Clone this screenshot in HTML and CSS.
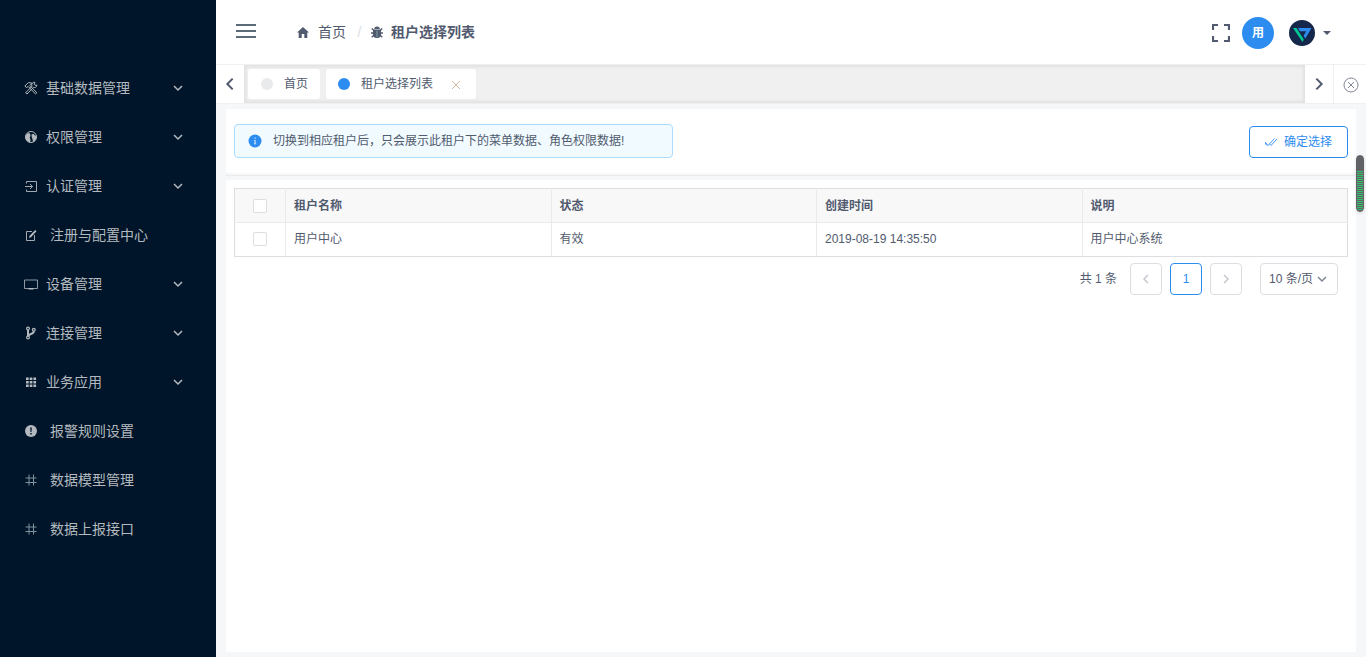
FILE: index.html
```html
<!DOCTYPE html>
<html lang="zh-CN">
<head>
<meta charset="utf-8">
<title>租户选择列表</title>
<link rel="stylesheet" href="styles.css">
</head>
<body>
<svg class="defs" aria-hidden="true">
  <symbol id="chevron" viewBox="0 0 12 12"><path d="M2 4l4 4 4-4" fill="none" stroke="currentColor" stroke-width="1.500"/></symbol>
  <symbol id="hash" viewBox="0 0 14 14"><path d="M5 1.500v11M9.500 1.500v11M1.500 5h11M1.500 9.500h11" fill="none" stroke="currentColor"/></symbol>
</svg>
<div class="layout">
  <aside class="sidebar">
    <nav class="menu">
      <button class="menu-item" type="button">
        <svg class="menu-icon" viewBox="0 0 14 14"><g fill="none" stroke="currentColor"><path d="M.8 5L4.500 1.500 8 2.200 5.800 4.500 12.800 11.800 11.500 13 4.300 5.500 2.500 6.500z"/><path d="M13 4.200a2.700 2.700 0 0 1-3.500 2.200L3 13 1.600 11.800 8 5.200a2.700 2.700 0 0 1 3-3.900L10 3.200l1 1z"/></g></svg>
        <span>基础数据管理</span><svg class="arrow"><use href="#chevron"/></svg>
      </button>
      <button class="menu-item" type="button">
        <svg class="menu-icon" viewBox="0 0 14 14"><circle cx="7" cy="7" r="5.500" fill="none" stroke="currentColor"/><path d="M1.500 5.500L4 3l2 .5.500 2-.7 2 .8 2.500L6 12.500C3 12 1 9.500 1.500 5.500zM7.500 4.500l2-.8 1.200 1.500 1.800.8c0 3-1.200 5-3.500 6.200L8.500 9l-.8-2z" fill="currentColor"/></svg>
        <span>权限管理</span><svg class="arrow"><use href="#chevron"/></svg>
      </button>
      <button class="menu-item" type="button">
        <svg class="menu-icon" viewBox="0 0 14 14"><path d="M2.500 4.500v-2h10v10h-10v-2M1 7.500h7.500M6 5l2.500 2.500L6 10" fill="none" stroke="currentColor" stroke-width=".9"/></svg>
        <span>认证管理</span><svg class="arrow"><use href="#chevron"/></svg>
      </button>
      <a class="menu-item leaf" href="#">
        <svg class="menu-icon" viewBox="0 0 14 14"><path d="M8 3.500H2.500v9h8V7" fill="none" stroke="currentColor" stroke-width=".9"/><path d="M5 10l.6-2.200L11.200 2l1.300 1.200L7 9.200z" fill="currentColor"/></svg>
        <span>注册与配置中心</span>
      </a>
      <button class="menu-item" type="button">
        <svg class="menu-icon" viewBox="0 0 14 14"><path d="M.5 3h13v8.500H.5z" fill="none" stroke="currentColor" stroke-width=".8"/><path d="M4.500 11h5v1.500h-5z" fill="currentColor"/></svg>
        <span>设备管理</span><svg class="arrow"><use href="#chevron"/></svg>
      </button>
      <button class="menu-item" type="button">
        <svg class="menu-icon" viewBox="0 0 14 14"><g fill="none" stroke="currentColor" stroke-width="1.200"><circle cx="4" cy="2.600" r="1.400"/><circle cx="4" cy="11.600" r="1.400"/><circle cx="9.800" cy="3.800" r="1.400"/></g><path d="M4 4v6M9.800 5.200C9.800 8.500 5 7.500 4.200 10" fill="none" stroke="currentColor" stroke-width="2"/></svg>
        <span>连接管理</span><svg class="arrow"><use href="#chevron"/></svg>
      </button>
      <button class="menu-item" type="button">
        <svg class="menu-icon" viewBox="0 0 14 14"><path d="M2 2.500h2.700v2.500H2zM5.700 2.500h2.700v2.500H5.700zM9.400 2.500h2.700v2.500H9.400zM2 6h2.700v2.500H2zM5.700 6h2.700v2.500H5.700zM9.400 6h2.700v2.500H9.400zM2 9.500h2.700V12H2zM5.700 9.500h2.700V12H5.700zM9.400 9.500h2.700V12H9.400z" fill="currentColor"/></svg>
        <span>业务应用</span><svg class="arrow"><use href="#chevron"/></svg>
      </button>
      <a class="menu-item leaf" href="#">
        <svg class="menu-icon" viewBox="0 0 14 14"><circle cx="7" cy="7" r="6" fill="currentColor"/><path d="M6.200 3.500h1.600L7.500 8h-1zM6.300 9h1.400v1.400H6.300z" fill="#001529"/></svg>
        <span>报警规则设置</span>
      </a>
      <a class="menu-item leaf" href="#"><svg class="menu-icon hash"><use href="#hash"/></svg><span>数据模型管理</span></a>
      <a class="menu-item leaf" href="#"><svg class="menu-icon hash"><use href="#hash"/></svg><span>数据上报接口</span></a>
    </nav>
  </aside>

  <div class="page">
    <header class="header">
      <button class="collapse" type="button" aria-label="收起菜单"><svg viewBox="0 0 20 14"><path d="M0 1h20M0 7h20M0 13h20" stroke="currentColor" stroke-width="1.800"/></svg></button>
      <nav class="breadcrumb">
        <a class="crumb" href="#"><svg viewBox="0 0 12 12"><path d="M6 1L0 6.500h1.700V12h3V8h2.600v4h3V6.500H12z" fill="currentColor"/></svg>首页</a>
        <span class="slash">/</span>
        <span class="crumb current"><svg viewBox="0 0 12 12"><path d="M3.200 3a2.800 2.500 0 0 1 5.600 0z" fill="currentColor"/><path d="M2 3.500h8v5a4 3.500 0 0 1-8 0z" fill="currentColor"/><path d="M.8 2.500l2 2M11.200 2.500l-2 2M0 7h12M.8 11.300l2-2M11.200 11.300l-2-2" stroke="currentColor" stroke-width="1.300"/><path d="M6 4.500v6.500" stroke="#7fa3a5"/></svg>租户选择列表</span>
      </nav>
      <div class="tools">
        <button class="fullscreen" type="button" aria-label="全屏"><svg viewBox="0 0 18 18"><path d="M1 6V1h5M12 1h5v5M17 12v5h-5M6 17H1v-5" fill="none" stroke="currentColor" stroke-width="2.200"/></svg></button>
        <span class="badge">用</span>
        <button class="user" type="button" aria-label="用户菜单">
          <svg class="avatar" viewBox="0 0 26 26"><circle cx="13" cy="13" r="13" fill="#15284b"/><path d="M4 8h3.500l7.300 11.500L13.500 22z" fill="#00c796"/><path d="M9 8h13.500L16.300 18.500l-1.700-2.700 2.700-4.600H11z" fill="#2d8cf0"/></svg>
          <svg class="caret" viewBox="0 0 8 4"><path d="M0 0h8L4 4z" fill="currentColor"/></svg>
        </button>
      </div>
    </header>

    <div class="tabs">
      <button class="scroll-button" type="button" aria-label="向左"><svg class="left"><use href="#chevron"/></svg></button>
      <div class="tab-list">
        <a class="tab" href="#"><i class="dot"></i>首页</a>
        <a class="tab active" href="#"><i class="dot"></i>租户选择列表<svg class="close" viewBox="0 0 10 10"><path d="M1 1l8 8M9 1L1 9" stroke="currentColor"/></svg></a>
      </div>
      <button class="scroll-button" type="button" aria-label="向右"><svg class="right"><use href="#chevron"/></svg></button>
      <button class="close-button" type="button" aria-label="关闭标签"><svg viewBox="0 0 16 16"><circle cx="8" cy="8" r="7" fill="none" stroke="currentColor"/><path d="M5 5l6 6M11 5l-6 6" stroke="currentColor"/></svg></button>
    </div>

    <main class="content">
      <section class="card toolbar">
        <div class="alert" role="status"><svg viewBox="0 0 14 14"><circle cx="7" cy="7" r="6.500" fill="#2d8cf0"/><path d="M6.500 3.500h1.200v1.300H6.500zM6 6h1.600v3.500h.6v.7H5.900v-.7h.6V6.700H6z" fill="#d5e8fc"/></svg>切换到相应租户后，只会展示此租户下的菜单数据、角色权限数据!</div>
        <button class="confirm" type="button"><svg viewBox="0 0 12 12"><path d="M0 6l3 3.500 6.500-7M4.500 8L6 9.500 12 3M0 7l2 2.500" fill="none" stroke="currentColor" stroke-width=".9"/></svg>确定选择</button>
      </section>
      <section class="card list">
        <table class="table">
          <thead><tr><th class="check"><input type="checkbox" aria-label="全选"></th><th>租户名称</th><th>状态</th><th>创建时间</th><th>说明</th></tr></thead>
          <tbody><tr><td class="check"><input type="checkbox" aria-label="选择用户中心"></td><td>用户中心</td><td>有效</td><td>2019-08-19 14:35:50</td><td>用户中心系统</td></tr></tbody>
        </table>
        <div class="pagination">
          <span class="total">共 1 条</span>
          <button class="page-button" type="button" disabled aria-label="上一页"><svg class="left"><use href="#chevron"/></svg></button>
          <button class="page-button current" type="button">1</button>
          <button class="page-button" type="button" disabled aria-label="下一页"><svg class="right"><use href="#chevron"/></svg></button>
          <span class="size"><select aria-label="每页条数"><option>10 条/页</option></select><svg><use href="#chevron"/></svg></span>
        </div>
      </section>
    </main>
    <div class="scroll-thumb"></div>
  </div>
</div>
</body>
</html>
```
FILE: styles.css
```css
* { box-sizing: border-box; }
body {
  margin: 0;
  color: #515a6e;
  font: 12px/18px "Liberation Sans", "Noto Sans CJK SC", sans-serif;
}
button, select, input { margin: 0; padding: 0; border: 0; background: none; color: inherit; font: inherit; }
a { color: inherit; text-decoration: none; }
svg { display: block; flex: none; }
.defs { position: absolute; width: 0; height: 0; }
.left { transform: rotate(90deg); }
.right { transform: rotate(-90deg); }

.layout { display: flex; min-height: 100vh; }
.sidebar { flex: none; width: 216px; padding-top: 63px; background: #001529; color: #b3b9bf; }
.menu { display: flex; flex-direction: column; }
.menu-item {
  display: flex;
  align-items: center;
  gap: 8px;
  height: 49px;
  padding: 0 32px 0 24px;
  font-size: 14px;
  line-height: 20px;
}
.leaf { gap: 12px; }
.menu-icon { width: 14px; height: 14px; }
.hash { color: #7e939e; }
.arrow { width: 12px; height: 12px; margin-left: auto; }

.page { position: relative; display: flex; flex: 1; flex-direction: column; min-width: 0; background: #f5f7f9; }
.header {
  display: flex;
  align-items: center;
  height: 65px;
  padding: 0 35px 0 20px;
  border-bottom: 1px solid #eef0f2;
  background: #fff;
}
.collapse { color: #5b6b79; }
.collapse svg { width: 20px; height: 14px; margin-bottom: 2px; }
.breadcrumb { display: flex; align-items: center; margin-left: 41px; font-size: 14px; line-height: 20px; }
.crumb { display: flex; align-items: center; gap: 9px; }
.crumb svg { width: 12px; height: 12px; }
.current.crumb { gap: 8px; font-weight: bold; }
.slash { width: 25px; padding-left: 2px; text-align: center; color: #dcdee2; }
.tools { display: flex; align-items: center; margin-left: auto; padding-top: 2px; }
.fullscreen svg { width: 18px; height: 18px; margin-right: 12px; }
.badge {
  width: 32px;
  border-radius: 50%;
  background: #2d8cf0;
  color: #fff;
  font-weight: bold;
  line-height: 32px;
  text-align: center;
}
.user { display: flex; align-items: center; gap: 8px; margin-left: 15px; }
.avatar { width: 26px; height: 26px; }
.caret { width: 8px; height: 4px; }

.tabs { display: flex; height: 39px; border-bottom: 1px solid #eef0f2; background: #fff; }
.scroll-button { display: flex; align-items: center; justify-content: center; width: 28px; }
.scroll-button svg { width: 16px; height: 16px; }
.tab-list {
  display: flex;
  flex: 1;
  gap: 6px;
  padding: 4px 5px 4px 4px;
  background: #f0f0f0;
  box-shadow: inset 0 0 3px 2px rgba(100, 100, 100, .1);
}
.tab {
  display: flex;
  align-items: center;
  gap: 11px;
  height: 30px;
  padding: 0 12px 0 13px;
  border-radius: 3px;
  background: #fff;
}
.tab.active { padding: 0 13px 0 12px; }
.dot { width: 12px; height: 12px; border-radius: 50%; background: #e8eaec; }
.active .dot { background: #2d8cf0; }
.close { width: 10px; height: 10px; margin: 2px 2px 0 7px; color: #d5b9a3; }
.close-button { display: flex; align-items: center; justify-content: center; width: 33px; border-left: 1px solid #eef0f2; color: #808695; }
.close-button svg { width: 16px; height: 16px; margin: 2px 0 0 2px; }

.content { display: flex; flex: 1; flex-direction: column; gap: 7px; padding: 5px 10px; }
.card { padding: 8px; background: #fff; }
.toolbar {
  display: flex;
  align-items: flex-start;
  justify-content: space-between;
  height: 64px;
  padding: 15px 8px;
  box-shadow: 0 2px 0 #f5f7f9, 0 3px 0 #e8eaec;
}
.alert {
  display: flex;
  align-items: center;
  gap: 11px;
  width: 439px;
  height: 34px;
  padding: 0 13px;
  border: 1px solid #abdcff;
  border-radius: 4px;
  background: #f0faff;
}
.alert svg { width: 14px; height: 14px; }
.confirm {
  display: flex;
  align-items: center;
  gap: 7px;
  height: 32px;
  margin-top: 2px;
  padding: 0 15px;
  border: 1px solid #2d8cf0;
  border-radius: 4px;
  color: #2d8cf0;
}
.confirm svg { width: 12px; height: 12px; }

.list { flex: 1; }
.table { width: 100%; border: 1px solid #dcdee2; border-collapse: collapse; table-layout: fixed; text-align: left; }
.table th, .table td { height: 34px; padding: 0 8px; border: 1px solid #e8eaec; }
.table td { padding-bottom: 1px; }
.table tr > :first-child { border-left-color: #dcdee2; }
.table tr > :last-child { border-right-color: #dcdee2; }
.table thead th { border-top-color: #dcdee2; background: #f8f8f9; }
.table tbody td { border-bottom-color: #dcdee2; }
.table .check { width: 51px; }
.check input {
  display: block;
  width: 14px;
  height: 14px;
  margin: 0 auto;
  border: 1px solid #dcdee2;
  border-radius: 2px;
  background: #fff;
  appearance: none;
}
.pagination { display: flex; align-items: center; justify-content: flex-end; gap: 8px; padding: 6px 10px; }
.total { margin-right: 5px; }
.page-button {
  display: flex;
  align-items: center;
  justify-content: center;
  width: 32px;
  height: 32px;
  border: 1px solid #dcdee2;
  border-radius: 4px;
  color: #c5c8ce;
}
.page-button svg { width: 12px; height: 12px; }
.page-button.current { border-color: #2d8cf0; color: #2d8cf0; }
.size { display: grid; align-items: center; margin-left: 10px; }
.size select, .size svg { grid-area: 1 / 1; }
.size select {
  width: 78px;
  height: 32px;
  padding: 0 8px;
  border: 1px solid #dcdee2;
  border-radius: 4px;
  appearance: none;
}
.size svg { justify-self: end; width: 12px; height: 12px; margin-right: 10px; pointer-events: none; color: #808695; }

.scroll-thumb {
  position: absolute;
  top: 155px;
  right: 2px;
  width: 8px;
  height: 57px;
  border: 1px solid #606266;
  border-radius: 4px;
  background: linear-gradient(#606266 15px, transparent 15px), repeating-linear-gradient(#606266 0 1px, #35c26d 1px 2px);
  box-shadow: 0 1px 3px rgba(0, 0, 0, .15);
}
```
